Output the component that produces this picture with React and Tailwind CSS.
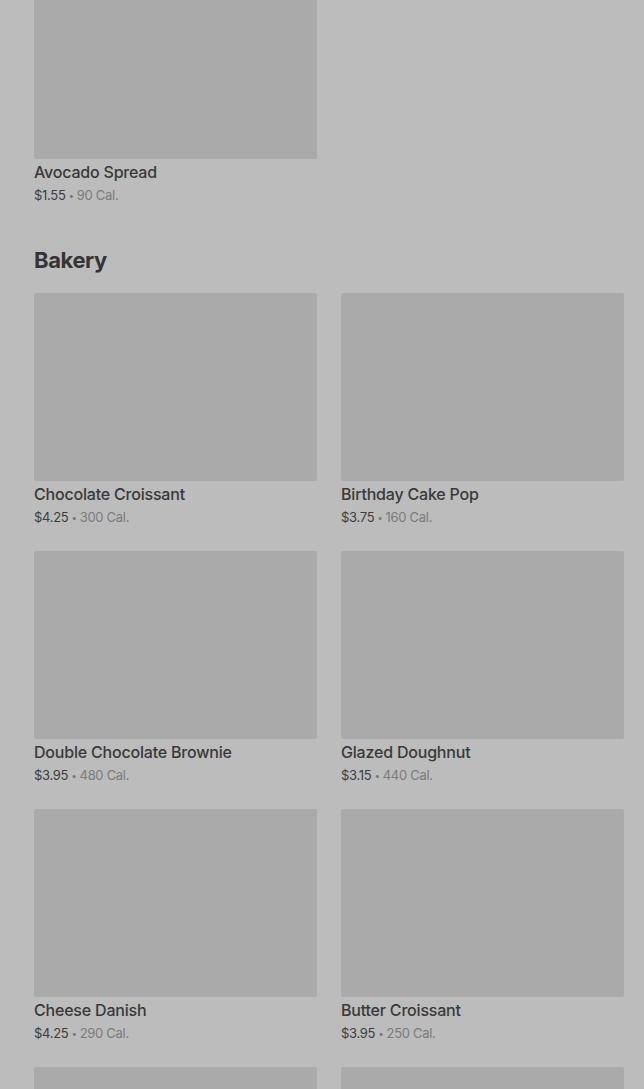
import React from "react";

const bakery = [
  { name: "Chocolate Croissant", price: "$4.25", cal: "300 Cal." },
  { name: "Birthday Cake Pop", price: "$3.75", cal: "160 Cal." },
  { name: "Double Chocolate Brownie", price: "$3.95", cal: "480 Cal." },
  { name: "Glazed Doughnut", price: "$3.15", cal: "440 Cal." },
  { name: "Cheese Danish", price: "$4.25", cal: "290 Cal." },
  { name: "Butter Croissant", price: "$3.95", cal: "250 Cal." },
  { name: "", price: "", cal: "" },
  { name: "", price: "", cal: "" },
];

function ItemCard({ item }) {
  return (
    <div className="flex flex-col">
      <div className="h-[188px] bg-[#aaaaaa] rounded-[2px]" />
      {item.name && (
        <div className="pt-[1px]">
          <div className="text-[16px] leading-[24px] font-medium text-[#393939] tracking-[-0.2px]">{item.name}</div>
          <div className="text-[13px] leading-[18px] mt-[2px] tracking-[-0.3px]">
            <span className="text-[#3d3d3d]">{item.price}</span>
            <span className="text-[#7b7b7b] text-[10px] px-[3px] align-[1px]">•</span>
            <span className="text-[#7b7b7b]">{item.cal}</span>
          </div>
        </div>
      )}
    </div>
  );
}

export default function App() {
  return (
    <div
      className="h-[1089px] overflow-hidden bg-[#bcbcbc] pl-[34px] pr-[20px]"
      style={{ fontFamily: "Inter, 'Noto Sans', sans-serif" }}
    >
      <div className="grid grid-cols-2 gap-x-[24px] mt-[-29px]">
        <ItemCard item={{ name: "Avocado Spread", price: "$1.55", cal: "90 Cal." }} />
      </div>

      <h2 className="mt-[42px] text-[22px] leading-[28px] font-bold text-[#343434] tracking-[-0.4px]">Bakery</h2>

      <div className="grid grid-cols-2 gap-x-[24px] gap-y-[25px] mt-[19px]">
        {bakery.map((item, i) => (
          <ItemCard key={i} item={item} />
        ))}
      </div>
    </div>
  );
}
